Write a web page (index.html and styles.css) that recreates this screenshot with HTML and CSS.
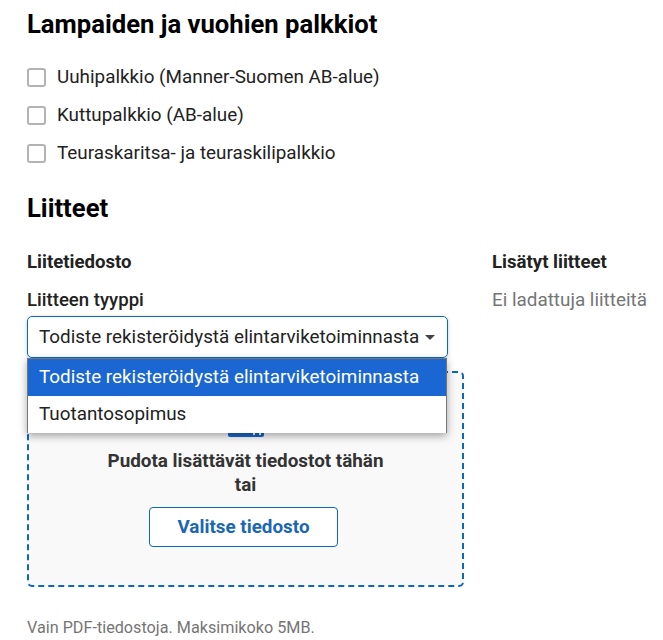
FILE: index.html
```html
<!DOCTYPE html>
<html lang="fi">
<head>
  <meta charset="UTF-8" />
  <title>Liitteet</title>
  <link rel="stylesheet" href="styles.css">
</head>
<body>
  <section class="rewards">
    <h2>Lampaiden ja vuohien palkkiot</h2>
    <label class="check"><span class="box"></span>Uuhipalkkio (Manner-Suomen AB-alue)</label>
    <label class="check"><span class="box"></span>Kuttupalkkio (AB-alue)</label>
    <label class="check"><span class="box"></span>Teuraskaritsa- ja teuraskilipalkkio</label>
  </section>
  <h2 class="attach-title">Liitteet</h2>
  <div class="columns">
    <div class="upload">
      <h3>Liitetiedosto</h3>
      <div class="field-label">Liitteen tyyppi</div>
      <div class="select">
        <span>Todiste rekisteröidystä elintarviketoiminnasta</span>
        <span class="caret"></span>
      </div>
      <div class="menu">
        <div class="option selected">Todiste rekisteröidystä elintarviketoiminnasta</div>
        <div class="option">Tuotantosopimus</div>
      </div>
      <div class="dropzone">
        <svg class="cloud" width="36" height="24" viewBox="0 0 36 24"><rect x="0" y="0" width="36" height="24" rx="2" fill="#1a66c9"/><path d="M25 20h2v2h-2zM31 20h2v2h-2z" fill="#fff"/></svg>
        <div class="drop-text">Pudota lisättävät tiedostot tähän<br>tai</div>
        <button class="pick">Valitse tiedosto</button>
      </div>
      <p class="hint">Vain PDF-tiedostoja. Maksimikoko 5MB.</p>
    </div>
    <div class="added">
      <h3>Lisätyt liitteet</h3>
      <p class="empty">Ei ladattuja liitteitä</p>
    </div>
  </div>
</body>
</html>
```

FILE: styles.css
```css
* {
  box-sizing: border-box;
}
html, body {
  height: 640px;
  overflow: hidden;
}
body {
  margin: 0;
  padding: 9px 0 0 27px;
  background: #fff;
  color: #282828;
  font-family: Roboto, sans-serif;
  font-size: 18.85px;
}
h2 {
  margin: 0;
  color: #000;
  font-size: 25.65px;
  line-height: 30px;
  font-weight: 700;
}
.rewards h2 {
  margin-bottom: 26px;
}
.check {
  display: flex;
  align-items: center;
  height: 24px;
  margin-bottom: 14px;
  color: #222;
}
.box {
  width: 19px;
  height: 19px;
  margin-right: 11px;
  background: #fff;
  border: 2px solid #b3b3b3;
  border-radius: 3px;
}
.attach-title {
  margin-top: 28px;
}
.columns {
  display: flex;
  margin-top: 27px;
}
.upload {
  position: relative;
  width: 437px;
  flex: none;
}
h3 {
  margin: 0;
  color: #222;
  font-size: 18.6px;
  line-height: 24px;
  font-weight: 700;
}
.field-label {
  margin-top: 14px;
  line-height: 24px;
  font-size: 18.6px;
  font-weight: 500;
  color: #222;
}
.select {
  display: flex;
  align-items: center;
  justify-content: space-between;
  width: 421px;
  height: 42px;
  margin-top: 4px;
  padding: 0 12px 0 11px;
  border: 1px solid #0a69bd;
  border-radius: 5px;
  box-shadow: 0 1px 4px rgba(0, 0, 0, 0.2);
  color: #222;
}
.caret {
  width: 0;
  height: 0;
  border-left: 5px solid transparent;
  border-right: 5px solid transparent;
  border-top: 5px solid #444;
}
.menu {
  position: absolute;
  top: 108px;
  left: 0;
  z-index: 2;
  width: 420px;
  background: #fff;
  border: 1px solid #777;
  border-bottom: 0;
  box-shadow: 0 3px 8px rgba(0, 0, 0, 0.35);
}
.option {
  height: 37px;
  padding-left: 11px;
  line-height: 36px;
  color: #222;
}
.option.selected {
  background: #1a66d2;
  color: #fff;
}
.dropzone {
  display: flex;
  flex-direction: column;
  align-items: center;
  width: 437px;
  height: 216px;
  margin-top: 13px;
  padding-top: 40px;
  background: #f9f9f9;
  border: 2px dashed #0a69bd;
  border-radius: 5px;
}
.cloud {
  display: block;
}
.drop-text {
  margin-top: 12px;
  text-align: center;
  color: #333;
  font-size: 18.85px;
  line-height: 24px;
  font-weight: 700;
}
.pick {
  width: 189px;
  height: 40px;
  margin: 10px 4px 0 0;
  background: #fff;
  border: 1px solid #0a69bd;
  border-radius: 4px;
  color: #1a66b5;
  font-family: Roboto, sans-serif;
  font-size: 18.85px;
  font-weight: 700;
}
.hint {
  margin: 31px 0 0;
  color: #757575;
  font-size: 16.2px;
  line-height: 20px;
}
.added {
  margin-left: 28px;
  white-space: nowrap;
}
.empty {
  margin: 14px 0 0;
  color: #757575;
  line-height: 24px;
}
```
